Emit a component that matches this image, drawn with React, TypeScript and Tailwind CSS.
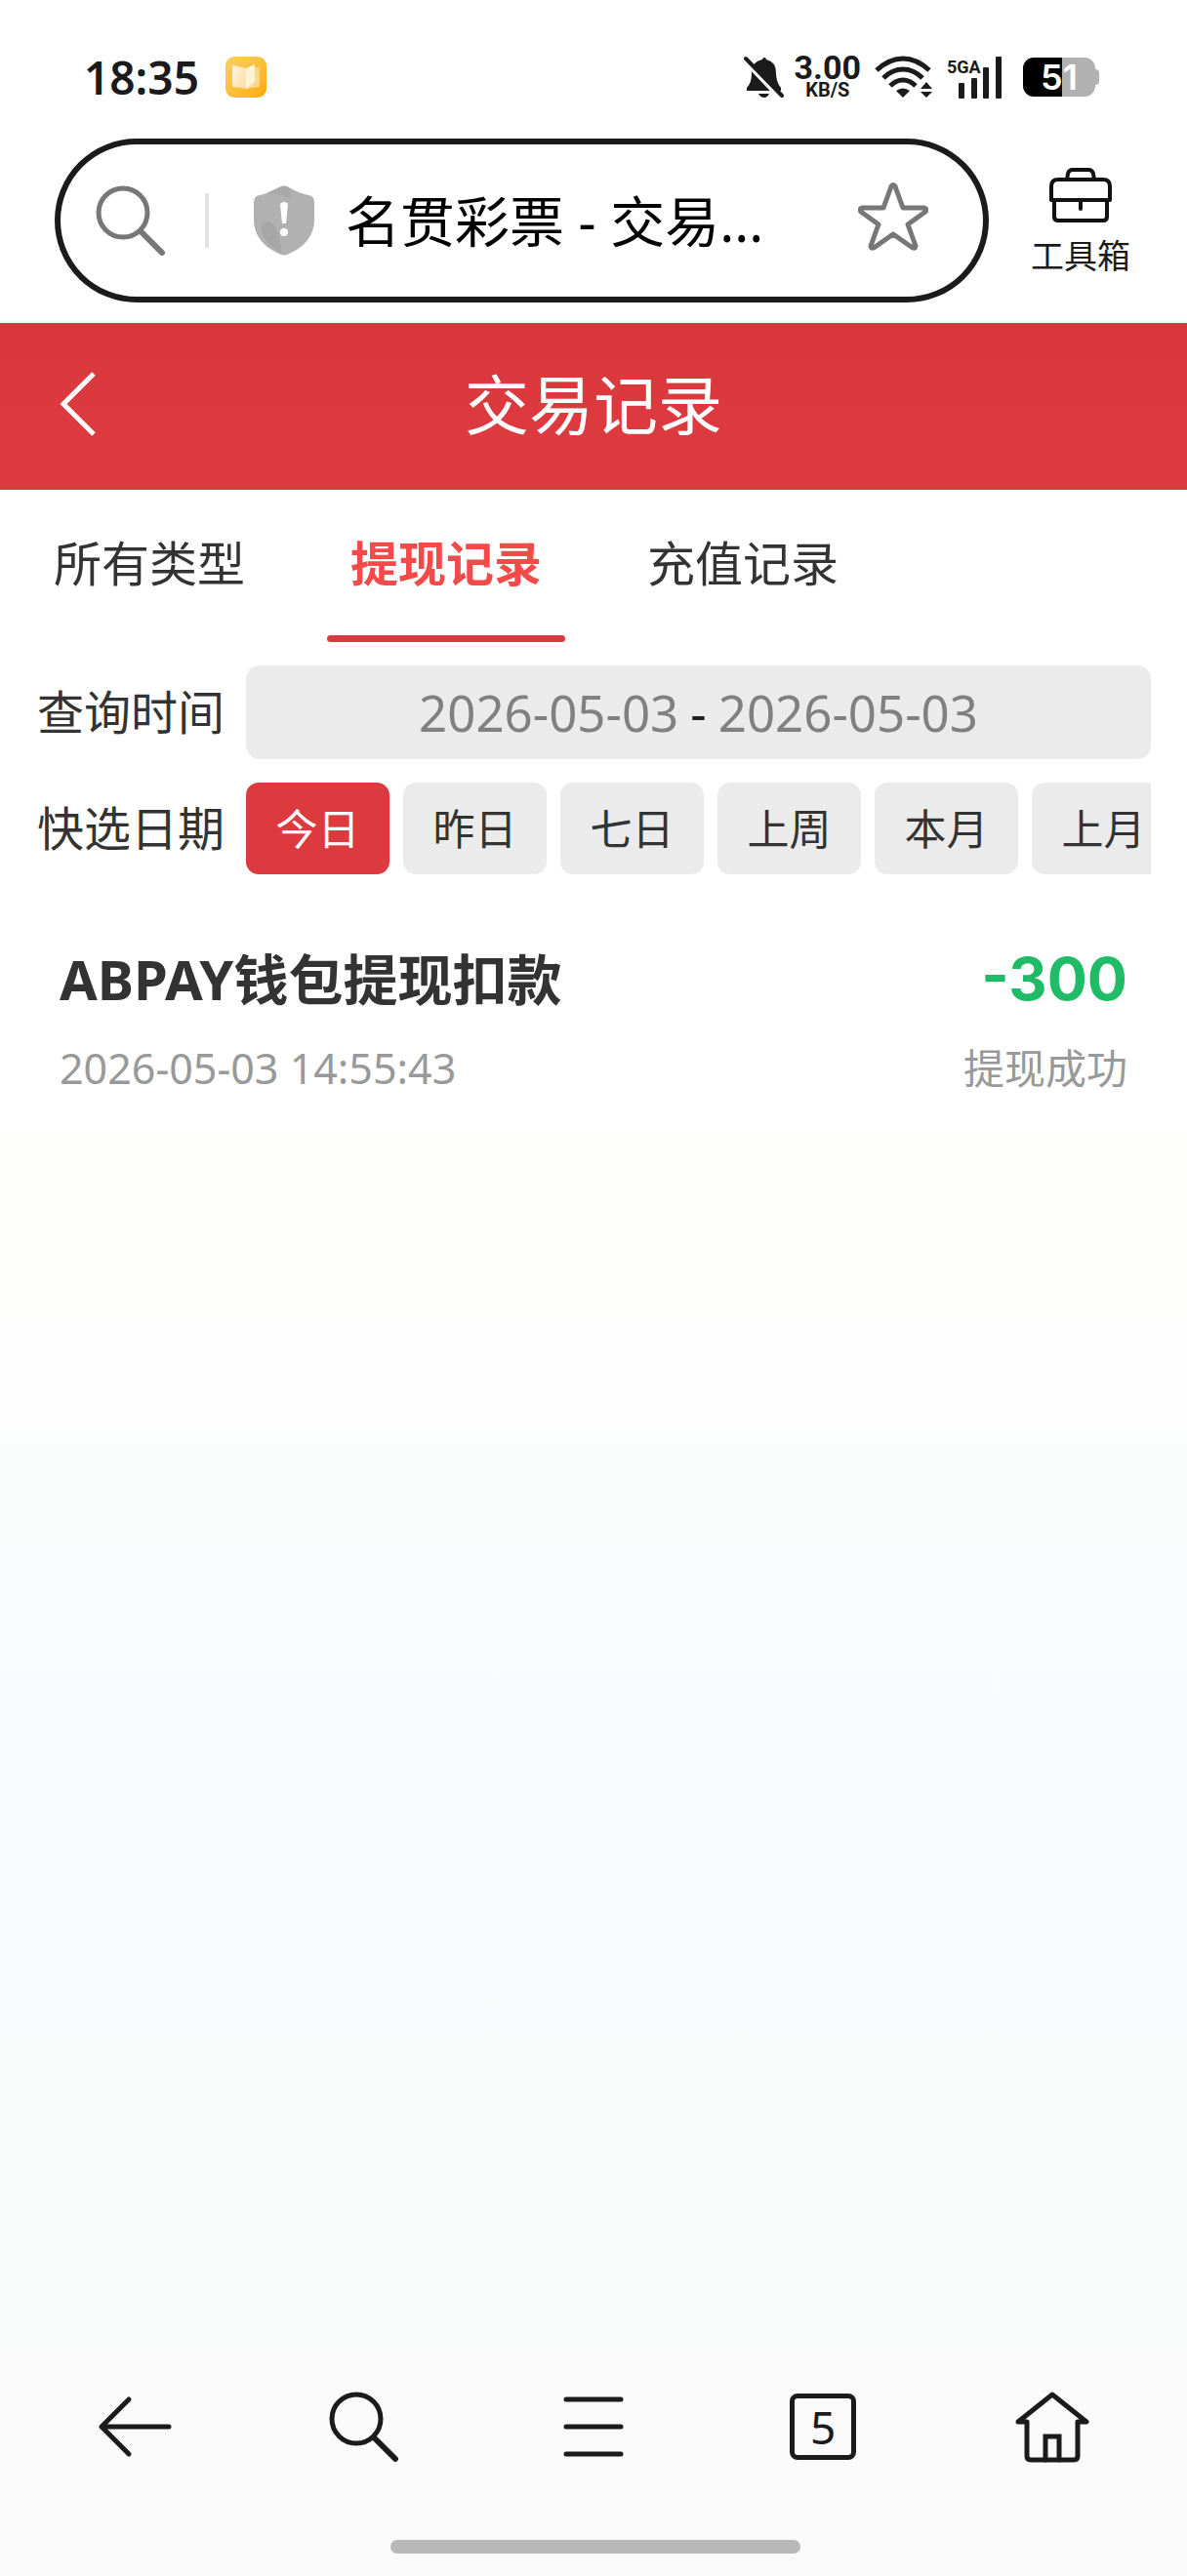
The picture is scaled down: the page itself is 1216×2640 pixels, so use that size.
import React, { useState } from 'react';

const TABS = ['所有类型', '提现记录', '充值记录'];
const QUICK_DATES = ['今日', '昨日', '七日', '上周', '本月', '上月'];

const BookIcon = () => (
  <svg width="42" height="42" viewBox="0 0 42 42" aria-hidden="true">
    <defs>
      <linearGradient id="bookBg" x1="0" y1="0" x2="1" y2="1">
        <stop offset="0" stopColor="#fbd168" />
        <stop offset="0.5" stopColor="#fcbf3c" />
        <stop offset="1" stopColor="#fda90a" />
      </linearGradient>
      <linearGradient id="bookPage" x1="0" y1="0" x2="1" y2="1">
        <stop offset="0" stopColor="#fff6e0" />
        <stop offset="1" stopColor="#fbdca4" />
      </linearGradient>
    </defs>
    <rect width="42" height="42" rx="9" fill="url(#bookBg)" />
    <path d="M28 11h6q1 0 1 1v19l-14 2z" fill="#fbd68c" />
    <path d="M8 9l13 3v21L8 31q-1 0-1-1V10q0-1 1-1z" fill="url(#bookPage)" />
    <path d="M21 12l9-4v18l-9 7z" fill="#fff3d6" />
  </svg>
);

const BellOffIcon = () => (
  <svg width="42" height="44" viewBox="0 0 42 44" aria-hidden="true">
    <path d="M21 2q2 0 2 2 10 2 10 14 0 9 5 15v3H3v-3q5-5 5-15Q8 6 19 4q0-2 2-2z" fill="#1b1b1b" />
    <path d="M15 39h11q-2 4-5 4-4 0-6-4z" fill="#1b1b1b" />
    <path d="M1 6l36 38" stroke="#fff" strokeWidth="4" />
    <path d="M2 3l37 38" stroke="#1b1b1b" strokeWidth="4" strokeLinecap="round" />
  </svg>
);

const WifiIcon = () => (
  <svg width="60" height="44" viewBox="0 0 60 44" fill="none" aria-hidden="true">
    <g stroke="#1b1b1b" strokeWidth="5">
      <path d="M2 15Q15 3 29 3t27 12" />
      <path d="M9 23q9-9 20-9t20 9" />
      <path d="M16 31q6-6 13-6t13 6" />
    </g>
    <path d="M22 36q7-5 14 0l-7 7z" fill="#1b1b1b" />
    <path d="M53 27l6 7H47zM53 43l6-6H47z" fill="#1b1b1b" />
  </svg>
);

const SignalIcon = () => (
  <svg width="58" height="44" viewBox="0 0 58 44" aria-hidden="true">
    <g fill="#1b1b1b">
      <rect x="12" y="28" width="6" height="16" rx="1" />
      <rect x="25" y="23" width="6" height="21" rx="1" />
      <rect x="37" y="12" width="6" height="32" rx="1" />
      <rect x="50" y="1" width="6" height="43" rx="1" />
    </g>
    <text x="0" y="18" fontSize="18" fontWeight="700" fontFamily="Roboto, sans-serif" fill="#1b1b1b">5GA</text>
  </svg>
);

const SearchIcon = ({ className }: { className: string }) => (
  <svg width="72" height="72" viewBox="0 0 72 72" fill="none" stroke="currentColor" className={className} aria-hidden="true">
    <circle cx="28" cy="28" r="25" strokeWidth="5" />
    <path d="M46 47l22 22" strokeWidth="6" strokeLinecap="round" />
  </svg>
);

const ShieldIcon = () => (
  <svg width="64" height="72" viewBox="0 0 64 72" aria-hidden="true">
    <path d="M27 2q5-3 10 0 10 6 20 8 6 1 6 7v18c0 18-12 29-26 35q-5 3-10 0C13 64 1 53 1 35V17q0-6 6-7 10-2 20-8z" fill="#b1b1b1" />
    <path d="M9 47q-3-8 8-10 11 5 12 32Q14 62 9 47z" fill="#a6a6a6" />
    <path d="M27 2q5-3 10 0l3 13Q31 9 14 8z" fill="#a9a9a9" />
    <path d="M28 19q4-4 8 0l-2 20h-4z" fill="#fff" />
    <circle cx="32" cy="48" r="4" fill="#fff" />
  </svg>
);

const StarIcon = () => (
  <svg width="72" height="72" viewBox="0 0 72 72" fill="none" stroke="#777" strokeWidth="5" strokeLinejoin="round" aria-hidden="true">
    <path d="M34 5q2-3 4 0l8 22 22 0q3 1 1 4L51 44l8 22q0 3-3 2L36 54 16 68q-3 1-3-2l8-22L3 31q-2-3 1-4l22 0z" />
  </svg>
);

const ToolboxIcon = () => (
  <svg width="64" height="56" viewBox="0 0 64 56" fill="none" stroke="#111" strokeWidth="4" strokeLinejoin="round" aria-hidden="true">
    <path d="M18 12l1-6q1-4 5-4h16q4 0 5 4l1 6" />
    <path d="M2 33V19q0-7 7-7h46q7 0 7 7v14z" />
    <path d="M5 33v17q0 4 4 4h46q4 0 4-4V33" />
    <path d="M32 33v9" strokeLinecap="round" />
  </svg>
);

const App: React.FC = () => {
  const [tab, setTab] = useState('提现记录');
  const [quick, setQuick] = useState('今日');

  return (
    <div className="min-h-screen flex flex-col bg-white text-[#333] font-['Noto_Sans','Noto_Sans_CJK_SC',sans-serif]">
      {/* Status bar */}
      <div className="flex items-center justify-between h-[142px] pt-4 pl-[86px] pr-[90px] text-[#1b1b1b]">
        <div className="flex items-center gap-[27px]">
          <span className="text-[46px] leading-none font-semibold">18:35</span>
          <BookIcon />
        </div>
        <div className="flex items-center">
          <BellOffIcon />
          <div className="flex flex-col items-center ml-[10px] font-bold font-['Roboto',sans-serif]">
            <span className="text-[34px] leading-[26px]">3.00</span>
            <span className="text-[20px] leading-[20px]">KB/S</span>
          </div>
          <div className="ml-[14px]"><WifiIcon /></div>
          <div className="ml-[14px]"><SignalIcon /></div>
          <div className="flex items-center ml-[20px]">
            <span className="flex items-center justify-center w-[74px] h-10 rounded-[11px] bg-linear-to-r from-black from-54% to-[#b1b1b1] to-54% text-white text-[36px] leading-none font-semibold font-['Inter',sans-serif]">51</span>
            <span className="w-1 h-4 rounded-r-sm bg-[#b1b1b1]" />
          </div>
        </div>
      </div>

      {/* Address bar */}
      <div className="flex items-center pl-14 pr-[58px] gap-[43px] pb-[21px]">
        <div className="flex-1 flex items-center h-[168px] border-[6px] border-[#1b1b1b] rounded-full pl-9 pr-[56px]">
          <button aria-label="搜索"><SearchIcon className="text-[#777]" /></button>
          <span className="w-1 h-14 ml-10 mr-[45px] bg-[#e2e2e2]" />
          <ShieldIcon />
          <span className="flex-1 ml-[31px] text-[56px] leading-none text-black whitespace-nowrap">名贯彩票 - 交易...</span>
          <button aria-label="收藏" className="pb-2"><StarIcon /></button>
        </div>
        <button className="flex flex-col items-center gap-[14px] pt-[2px] text-[34px] leading-10 text-[#1b1b1b]">
          <ToolboxIcon />
          工具箱
        </button>
      </div>

      {/* Page header */}
      <header className="grid grid-cols-[1fr_auto_1fr] items-center h-[171px] px-[60px] pb-[6px] bg-linear-to-b from-[#d7373b] to-[#dc3a3f] to-60% text-white">
        <button aria-label="返回" className="justify-self-start">
          <svg width="40" height="66" viewBox="0 0 40 66" fill="none" stroke="currentColor" strokeWidth="5" aria-hidden="true">
            <path d="M36 2L5 33l31 31" />
          </svg>
        </button>
        <h1 className="text-[66px] leading-none">交易记录</h1>
      </header>

      {/* Type tabs */}
      <nav className="flex gap-[60px] px-[31px]">
        {TABS.map(t => (
          <button
            key={t}
            onClick={() => setTab(t)}
            className={`h-[156px] px-6 border-b-[6px] border-transparent text-[49px] leading-none relative ${t === tab ? 'text-[#f44a4a] font-bold' : ''}`}
          >
            {t}
            {t === tab && <span className="absolute left-0 right-0 -bottom-[6px] h-[7px] rounded-full bg-[#d93c40]" />}
          </button>
        ))}
      </nav>

      {/* Filters */}
      <section className="grid grid-cols-[auto_1fr] items-center gap-x-[22px] gap-y-6 pt-6 pl-[38px] pr-[37px] text-[48px] leading-none">
        <span>查询时间</span>
        <button className="flex items-center justify-center gap-3 h-24 rounded-[14px] bg-[#ebebeb] text-[51px] text-[#808080]">
          <span>2026-05-03</span>
          <span className="text-[#222]">-</span>
          <span>2026-05-03</span>
        </button>
        <span>快选日期</span>
        <div className="flex gap-[14px] overflow-hidden">
          {QUICK_DATES.map(d => (
            <button
              key={d}
              onClick={() => setQuick(d)}
              className={`shrink-0 w-[147px] h-[94px] rounded-[13px] text-[43px] ${d === quick ? 'bg-[#dc3a3f] text-white' : 'bg-[#ebebeb]'}`}
            >
              {d}
            </button>
          ))}
        </div>
      </section>

      {/* Records */}
      <main className="flex-1 flex flex-col">
        <article className="flex justify-between px-[61px] pt-[67px] pb-6">
          <div className="flex flex-col gap-3">
            <h2 className="text-[56px] leading-[80px] font-bold">ABPAY钱包提现扣款</h2>
            <time className="text-[43px] leading-[80px] text-[#999]">2026-05-03 14:55:43</time>
          </div>
          <div className="flex flex-col gap-3 items-end">
            <strong className="text-[61px] leading-[80px] font-bold text-[#1fbb66] font-['Inter',sans-serif]">-300</strong>
            <span className="text-[42px] leading-[80px] text-[#999]">提现成功</span>
          </div>
        </article>
        <div className="flex-1 bg-linear-to-b from-[#fefefc] via-[#fbfcfd] via-40% to-[#f9fafa]" />
      </main>

      {/* Browser toolbar */}
      <footer className="bg-[#fafafa] text-[#1b1b1b]">
        <div className="grid grid-cols-5 justify-items-center items-center h-[164px] px-5">
          <button aria-label="后退">
            <svg width="76" height="64" viewBox="0 0 76 64" fill="none" stroke="currentColor" strokeWidth="5" strokeLinecap="round" strokeLinejoin="round" aria-hidden="true">
              <path d="M32 4L4 32l28 28M4 32h69" />
            </svg>
          </button>
          <button aria-label="查找"><SearchIcon className="text-[#1b1b1b]" /></button>
          <button aria-label="菜单">
            <svg width="62" height="62" viewBox="0 0 62 62" stroke="currentColor" strokeWidth="5" strokeLinecap="round" aria-hidden="true">
              <path d="M3 3h56M3 31h56M3 59h56" />
            </svg>
          </button>
          <button aria-label="标签页" className="w-[68px] h-[68px] border-[5px] border-current rounded-lg text-[46px] leading-none flex items-center justify-center">5</button>
          <button aria-label="主页">
            <svg width="76" height="74" viewBox="0 0 76 74" fill="none" stroke="currentColor" strokeWidth="5" strokeLinecap="round" strokeLinejoin="round" aria-hidden="true">
              <path d="M12 32H3L38 4l35 28h-9v35q0 4-4 4H16q-4 0-4-4z" />
              <path d="M31 71V47h14v24" strokeLinejoin="miter" />
            </svg>
          </button>
        </div>
        <div className="flex justify-center pt-[34px] pb-[23px] pl-1">
          <span className="w-[420px] h-[14px] rounded-[7px] bg-[#b8b8b8]" />
        </div>
      </footer>
    </div>
  );
};

export default App;
